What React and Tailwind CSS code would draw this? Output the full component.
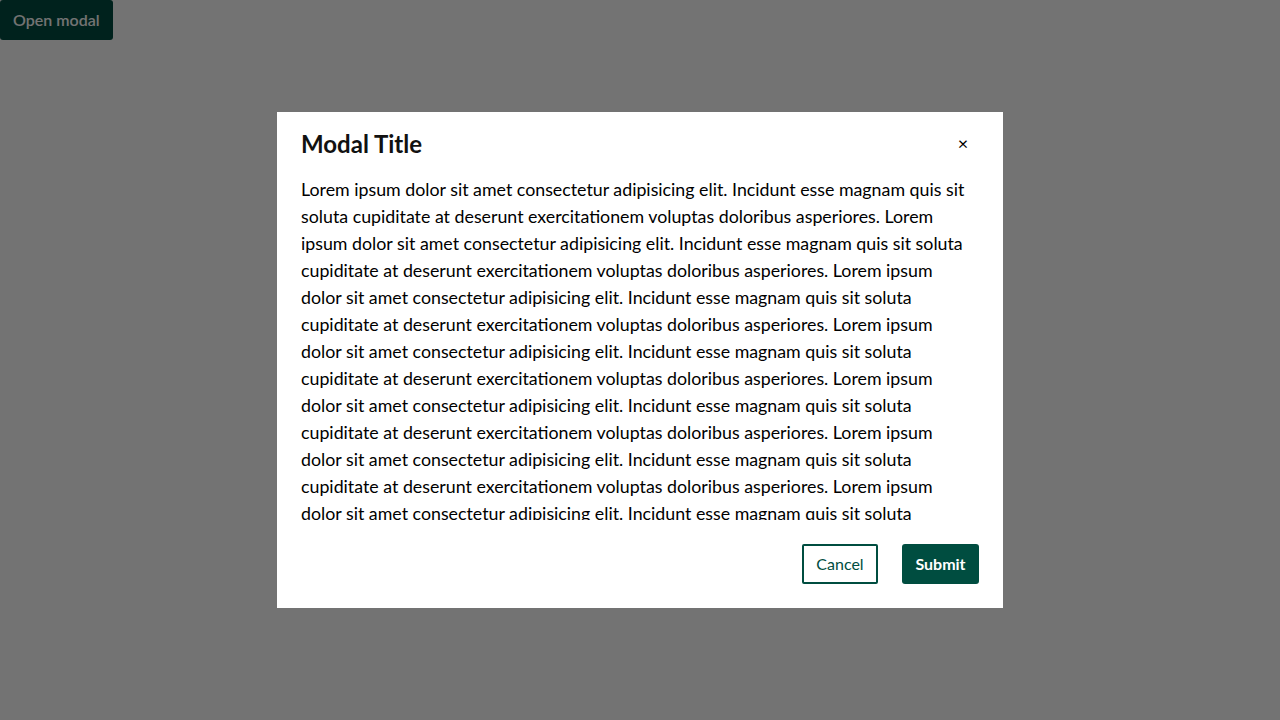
import React from "react";

const para =
  "Lorem ipsum dolor sit amet consectetur adipisicing elit. Incidunt esse magnam quis sit soluta cupiditate at deserunt exercitationem voluptas doloribus asperiores. ";

export default function App() {
  return (
    <div
      className="relative w-[1280px] h-[720px] bg-white overflow-hidden"
      style={{ fontFamily: "Lato, 'Noto Sans', sans-serif" }}
    >
      <button className="h-10 px-[13px] bg-[#004d40] text-white text-base font-semibold rounded-[3px]">
        Open modal
      </button>
      <div className="absolute inset-0 bg-[rgba(0,0,0,0.55)] flex items-center justify-center">
        <div className="w-[726px] h-[496px] bg-white flex flex-col">
          <div className="flex items-center justify-between px-6 pt-4 pb-4">
            <h2 className="text-2xl leading-8 font-bold text-[#111]">Modal Title</h2>
            <button className="w-8 h-8 pb-[3px] flex items-center justify-center text-[18px] text-black leading-none">
              ×
            </button>
          </div>
          <div className="pl-6 pr-8 h-[344px] overflow-hidden text-[17.8px] leading-[27px] text-black">
            {para.repeat(8)}
          </div>
          <div className="flex justify-end gap-6 p-6">
            <button className="h-10 w-[76px] border-2 border-[#004d40] text-[#004d40] text-base rounded-[2px]">
              Cancel
            </button>
            <button className="h-10 w-[77px] bg-[#004d40] text-white text-base font-bold rounded-[3px]">
              Submit
            </button>
          </div>
        </div>
      </div>
    </div>
  );
}
